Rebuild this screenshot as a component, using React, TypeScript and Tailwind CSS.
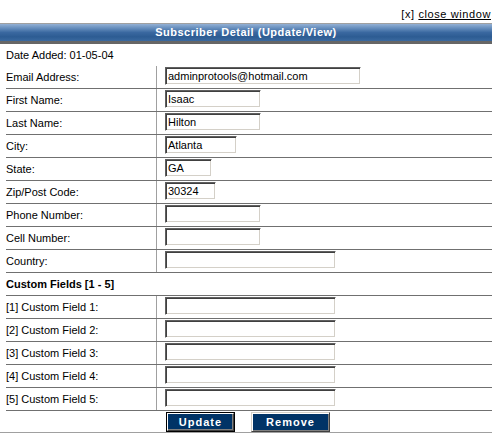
import React from "react";

const font = { fontFamily: '"Liberation Sans", Arial, sans-serif' };

type Row = { label: string; w: string; v: string };

const rows: Row[] = [
  { label: "Email Address:", w: "w-[196px]", v: "adminprotools@hotmail.com" },
  { label: "First Name:", w: "w-[96px]", v: "Isaac" },
  { label: "Last Name:", w: "w-[96px]", v: "Hilton" },
  { label: "City:", w: "w-[72px]", v: "Atlanta" },
  { label: "State:", w: "w-[47px]", v: "GA" },
  { label: "Zip/Post Code:", w: "w-[51px]", v: "30324" },
  { label: "Phone Number:", w: "w-[96px]", v: "" },
  { label: "Cell Number:", w: "w-[96px]", v: "" },
  { label: "Country:", w: "w-[171px]", v: "" },
];

const custom = [1, 2, 3, 4, 5];

function Field({ w, v }: { w: string; v: string }) {
  return (
    <input
      readOnly
      defaultValue={v}
      className={`${w} h-[18px] block border border-t-[#606060] border-l-[#606060] border-r-white border-b-white shadow-[inset_1px_1px_0_#404040,inset_-1px_-1px_0_#d4d0c8] bg-white px-[2px] text-[11px] leading-[14px] text-black outline-none`}
      style={font}
    />
  );
}

function FormRow({ label, w, v, first }: Row & { first?: boolean }) {
  return (
    <div className={`flex ${first ? "h-[22px]" : "h-[23px] border-t border-[#707070]"}`}>
      <div className="w-[151px] shrink-0 border-r border-[#a0a0a0] flex items-center text-[11px] text-black">
        {label}
      </div>
      <div className="pl-[8px] pt-[1px]">
        <Field w={w} v={v} />
      </div>
    </div>
  );
}

export default function App() {
  return (
    <div className="w-[492px] h-[438px] bg-white text-black overflow-hidden" style={font}>
      <div className="h-[23px] pt-[7px] flex justify-end pr-[1px] text-[11px] leading-[14px] tracking-[0.6px]">
        <span>[x]&nbsp;<span className="underline">close window</span></span>
      </div>
      <div className="border-t border-[#a0a0a0]">
        <div className="h-[17px] bg-[linear-gradient(to_bottom,#93b0d4_0%,#6a91bf_22%,#3a68a0_50%,#2d5c93_75%,#3a699f_100%)] text-center text-white font-bold text-[11px] leading-[17px] tracking-[0.5px]">
          Subscriber Detail (Update/View)
        </div>
        <div className="h-[3px] bg-[#666666]" />
      </div>
      <div className="pl-[6px]">
        <div className="h-[22px] flex items-center text-[11px]">Date Added: 01-05-04</div>
        {rows.map((r, i) => (
          <FormRow key={r.label} {...r} first={i === 0} />
        ))}
        <div className="h-[23px] border-t border-[#707070] flex items-center text-[11px] font-bold">
          Custom Fields [1 - 5]
        </div>
        {custom.map((n) => (
          <FormRow key={n} label={`[${n}] Custom Field ${n}:`} w="w-[171px]" v="" />
        ))}
        <div className="h-[22px] border-t border-[#707070] flex items-start pt-[1px]">
          <div className="ml-[160px] w-[69px] h-[20px] border border-black">
            <button
              className="w-full h-full bg-[#003366] border border-t-white border-l-white border-r-[#404040] border-b-[#404040] shadow-[inset_-1px_-1px_0_#808080] text-white font-bold text-[11px] leading-[14px] tracking-[1px] flex items-center justify-center"
              style={font}
            >
              Update
            </button>
          </div>
          <button
            className="ml-[16px] w-[79px] h-[20px] bg-[#003366] border border-t-[#d4d0c8] border-l-[#d4d0c8] border-r-[#404040] border-b-[#404040] shadow-[inset_1px_1px_0_#ffffff,inset_-1px_-1px_0_#808080] text-white font-bold text-[11px] leading-[14px] tracking-[1px] flex items-center justify-center"
            style={font}
          >
            Remove
          </button>
        </div>
      </div>
      <div className="border-t border-[#a0a0a0]" />
    </div>
  );
}
